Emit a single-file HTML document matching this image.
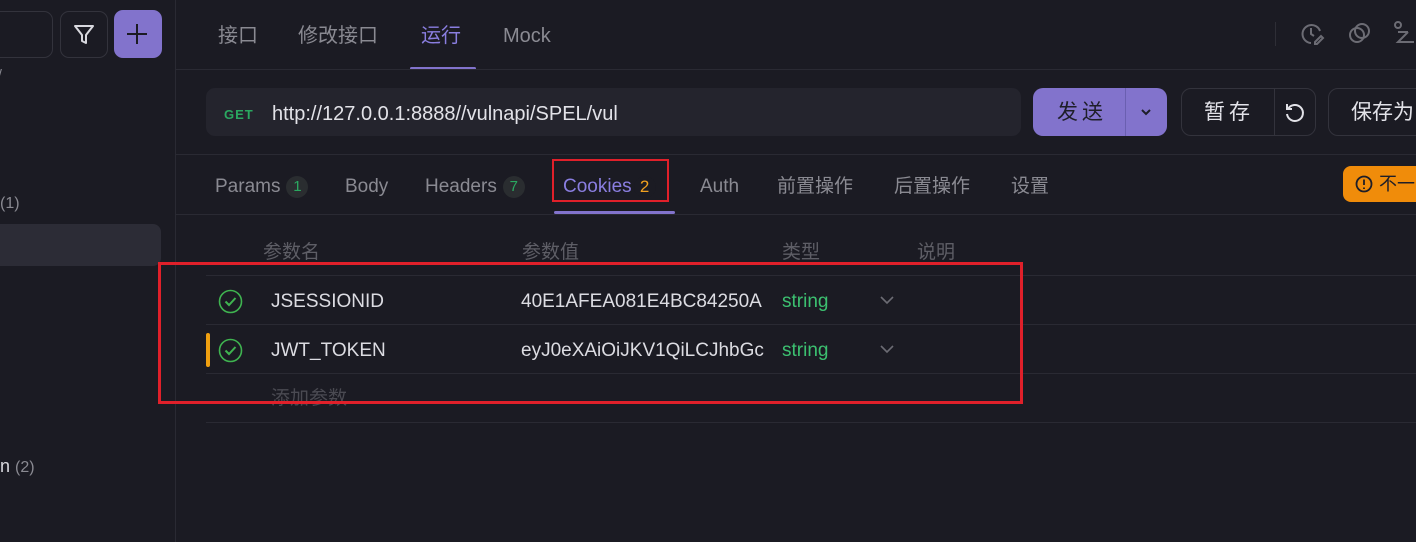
<!DOCTYPE html>
<html><head><meta charset="utf-8"><style>
*{margin:0;padding:0;box-sizing:border-box}
body{width:1416px;height:542px;overflow:hidden;background:#1b1b23;font-family:"Liberation Sans","Noto Sans CJK SC",sans-serif;color:#d8d8de;position:relative}
.a{position:absolute;white-space:nowrap;line-height:24px}
.hl{position:absolute;height:1px;background:#2a2a33}
.g{color:#8a8a92}
.badge{display:inline-block;width:22px;height:22px;border-radius:11px;background:#2a2d30;text-align:center;line-height:22px;font-size:15px;margin-left:6px;vertical-align:middle}
</style></head><body>
<!-- sidebar -->
<div class="a" style="left:175px;top:0;width:1px;height:542px;background:#2a2a33"></div>
<div class="a" style="left:-20px;top:11px;width:73px;height:47px;border:1px solid #33333c;border-radius:9px"></div>
<div class="a" style="left:60px;top:11px;width:48px;height:47px;border:1px solid #33333c;border-radius:9px"></div>
<svg class="a" style="left:72px;top:24px" width="24" height="22" viewBox="0 0 24 22"><path d="M3 2h18l-7 9v8l-4-2v-6z" fill="none" stroke="#d8d8de" stroke-width="2" stroke-linejoin="round"/></svg>
<div class="a" style="left:114px;top:10px;width:48px;height:48px;background:#8273cc;border-radius:9px"></div>
<div class="a" style="left:127px;top:33px;width:20px;height:2px;background:#1b1b23"></div>
<div class="a" style="left:136px;top:24px;width:2px;height:20px;background:#1b1b23"></div>
<div class="a g" style="left:-2px;top:62px;font-size:14px">/</div>
<div class="a g" style="left:0;top:192px;font-size:16px">(1)</div>
<div class="a" style="left:0;top:224px;width:161px;height:42px;background:#2c2c36;border-radius:0 8px 8px 0"></div>
<div class="a" style="left:0;top:454px;font-size:18px;color:#d8d8de">n <span class="g" style="font-size:16px">(2)</span></div>
<!-- top tabs -->
<div class="a g" style="left:218px;top:24px;font-size:20px">接口</div>
<div class="a g" style="left:298px;top:24px;font-size:20px">修改接口</div>
<div class="a" style="left:421px;top:24px;font-size:20px;color:#8a7ee0">运行</div>
<div class="a g" style="left:503px;top:24px;font-size:20px">Mock</div>
<div class="a" style="left:410px;top:67px;width:66px;height:3px;background:#8273cc;border-radius:2px"></div>
<div class="hl" style="left:176px;top:69px;width:1240px"></div>
<div class="a" style="left:1275px;top:22px;width:1px;height:24px;background:#2e2e36"></div>
<svg class="a" style="left:1299px;top:20px" width="28" height="28" viewBox="0 0 28 28" fill="none" stroke="#6c6c74" stroke-width="2"><path d="M21 11A9 9 0 1 0 12 23"/><path d="M12 8v6l3 2"/><path d="M16 22l6-6 2 2-6 6h-2z"/></svg>
<svg class="a" style="left:1346px;top:20px" width="28" height="28" viewBox="0 0 28 28" fill="none" stroke="#6c6c74" stroke-width="2"><circle cx="11" cy="15" r="7"/><circle cx="16" cy="11" r="7"/></svg>
<svg class="a" style="left:1394px;top:20px" width="22" height="28" viewBox="0 0 22 28" fill="none" stroke="#6c6c74" stroke-width="2"><circle cx="4" cy="5" r="3"/><path d="M4 12h10M14 12l-10 10h16"/></svg>
<!-- url bar -->
<div class="a" style="left:206px;top:88px;width:815px;height:48px;background:#24242d;border-radius:9px"></div>
<div class="a" style="left:224px;top:103px;font-size:13px;font-weight:bold;color:#2aa860;letter-spacing:1px">GET</div>
<div class="a" style="left:272px;top:102px;font-size:20px;color:#e2e2e8">http://127.0.0.1:8888//vulnapi/SPEL/vul</div>
<div class="a" style="left:1033px;top:88px;width:134px;height:48px;background:#8273cc;border-radius:10px"></div>
<div class="a" style="left:1125px;top:88px;width:1px;height:48px;background:#6a5fb0"></div>
<div class="a" style="left:1057px;top:101px;font-size:21px;color:#1e1e28;letter-spacing:4px">发送</div>
<svg class="a" style="left:1139px;top:107px" width="14" height="10" viewBox="0 0 14 10"><path d="M3 3l4 4 4-4" fill="none" stroke="#1e1e28" stroke-width="2"/></svg>
<div class="a" style="left:1181px;top:88px;width:135px;height:48px;border:1px solid #33333c;border-radius:10px"></div>
<div class="a" style="left:1274px;top:88px;width:1px;height:48px;background:#33333c"></div>
<div class="a" style="left:1204px;top:101px;font-size:21px;color:#e2e2e8;letter-spacing:4px">暂存</div>
<svg class="a" style="left:1283px;top:101px" width="24" height="24" viewBox="0 0 24 24" fill="none" stroke="#e2e2e8" stroke-width="2"><path d="M5 8A8 8 0 1 1 4 13"/><path d="M4 3v5h5"/></svg>
<div class="a" style="left:1328px;top:88px;width:110px;height:48px;border:1px solid #33333c;border-radius:10px"></div>
<div class="a" style="left:1351px;top:101px;font-size:21px;color:#e2e2e8">保存为</div>
<div class="hl" style="left:176px;top:154px;width:1240px"></div>
<!-- sub tabs -->
<div class="a g" style="left:215px;top:175px;font-size:19px">Params<span class="badge" style="color:#2aa860">1</span></div>
<div class="a g" style="left:345px;top:175px;font-size:19px">Body</div>
<div class="a g" style="left:425px;top:175px;font-size:19px">Headers<span class="badge" style="color:#2aa860">7</span></div>
<div class="a" style="left:563px;top:175px;font-size:19px;color:#8a7ee0">Cookies<span class="badge" style="color:#f0a020;background:#1b1b23;margin-left:2px;font-size:17px">2</span></div>
<div class="a g" style="left:700px;top:175px;font-size:19px">Auth</div>
<div class="a g" style="left:777px;top:175px;font-size:19px">前置操作</div>
<div class="a g" style="left:894px;top:175px;font-size:19px">后置操作</div>
<div class="a g" style="left:1011px;top:175px;font-size:19px">设置</div>
<div class="a" style="left:554px;top:211px;width:121px;height:3px;background:#8273cc;border-radius:2px"></div>
<div class="a" style="left:552px;top:159px;width:117px;height:43px;border:2px solid #e0202a"></div>
<div class="a" style="left:1343px;top:166px;width:90px;height:36px;background:#f08c0a;border-radius:8px"></div>
<svg class="a" style="left:1354px;top:174px" width="20" height="20" viewBox="0 0 20 20" fill="none" stroke="#1e1e28" stroke-width="1.8"><circle cx="10" cy="10" r="7.5"/><path d="M10 5.5v5.5M10 13.5v1.5"/></svg>
<div class="a" style="left:1379px;top:172px;font-size:18px;color:#1e1e28">不一</div>
<div class="hl" style="left:176px;top:214px;width:1240px"></div>
<!-- table -->
<div class="a" style="left:263px;top:241px;font-size:19px;color:#5e5e66">参数名</div>
<div class="a" style="left:522px;top:241px;font-size:19px;color:#5e5e66">参数值</div>
<div class="a" style="left:782px;top:241px;font-size:19px;color:#5e5e66">类型</div>
<div class="a" style="left:917px;top:241px;font-size:19px;color:#5e5e66">说明</div>
<div class="hl" style="left:206px;top:275px;width:1210px"></div>
<div class="hl" style="left:206px;top:324px;width:1210px"></div>
<div class="hl" style="left:206px;top:373px;width:1210px"></div>
<div class="hl" style="left:206px;top:422px;width:1210px"></div>
<svg class="a" style="left:218px;top:289px" width="25" height="25" viewBox="0 0 25 25" fill="none" stroke="#3fb450" stroke-width="1.6"><circle cx="12.5" cy="12.5" r="11"/><path d="M7.5 12.5l3.5 3.5 6.5-7" stroke-width="2"/></svg>
<div class="a" style="left:271px;top:290px;font-size:19px;color:#dcdce2">JSESSIONID</div>
<div class="a" style="left:521px;top:290px;font-size:19px;color:#dcdce2;width:244px;overflow:hidden">40E1AFEA081E4BC84250A</div>
<div class="a" style="left:782px;top:290px;font-size:19px;color:#3cc070">string</div>
<svg class="a" style="left:879px;top:294px" width="16" height="12" viewBox="0 0 16 12"><path d="M2 3l6 6 6-6" fill="none" stroke="#6c6c74" stroke-width="1.6"/></svg>
<div class="a" style="left:206px;top:333px;width:4px;height:34px;background:#f0a010;border-radius:2px"></div>
<svg class="a" style="left:218px;top:338px" width="25" height="25" viewBox="0 0 25 25" fill="none" stroke="#3fb450" stroke-width="1.6"><circle cx="12.5" cy="12.5" r="11"/><path d="M7.5 12.5l3.5 3.5 6.5-7" stroke-width="2"/></svg>
<div class="a" style="left:271px;top:339px;font-size:19px;color:#dcdce2">JWT_TOKEN</div>
<div class="a" style="left:521px;top:339px;font-size:19px;color:#dcdce2;width:244px;overflow:hidden">eyJ0eXAiOiJKV1QiLCJhbGciOiJIUzI1NiJ9</div>
<div class="a" style="left:782px;top:339px;font-size:19px;color:#3cc070">string</div>
<svg class="a" style="left:879px;top:343px" width="16" height="12" viewBox="0 0 16 12"><path d="M2 3l6 6 6-6" fill="none" stroke="#6c6c74" stroke-width="1.6"/></svg>
<div class="a" style="left:271px;top:387px;font-size:19px;color:#4a4a52">添加参数</div>
<div class="a" style="left:158px;top:262px;width:865px;height:142px;border:3px solid #e0202a"></div>
</body></html>
